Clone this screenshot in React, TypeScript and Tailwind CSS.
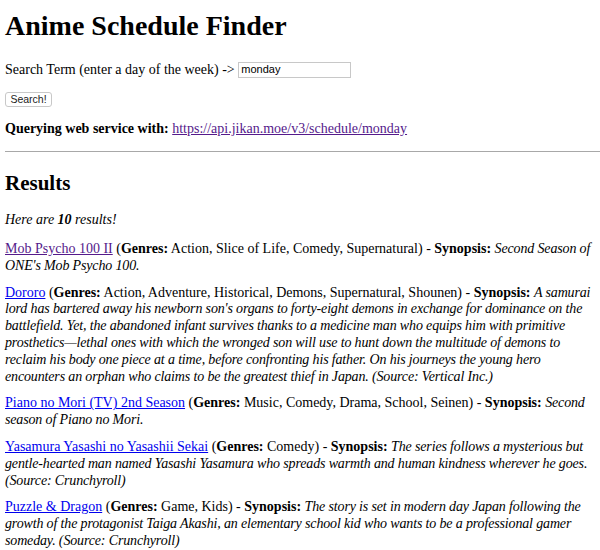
import React from "react";

type Item = { title: string; visited?: boolean; genres: string; synopsis: string };

const items: Item[] = [
  {
    title: "Mob Psycho 100 II",
    visited: true,
    genres: "Action, Slice of Life, Comedy, Supernatural",
    synopsis: "Second Season of ONE's Mob Psycho 100.",
  },
  {
    title: "Dororo",
    genres: "Action, Adventure, Historical, Demons, Supernatural, Shounen",
    synopsis:
      "A samurai lord has bartered away his newborn son's organs to forty-eight demons in exchange for dominance on the battlefield. Yet, the abandoned infant survives thanks to a medicine man who equips him with primitive prosthetics\u2014lethal ones with which the wronged son will use to hunt down the multitude of demons to reclaim his body one piece at a time, before confronting his father. On his journeys the young hero encounters an orphan who claims to be the greatest thief in Japan. (Source: Vertical Inc.)",
  },
  {
    title: "Piano no Mori (TV) 2nd Season",
    genres: "Music, Comedy, Drama, School, Seinen",
    synopsis: "Second season of Piano no Mori.",
  },
  {
    title: "Yasamura Yasashi no Yasashii Sekai",
    genres: "Comedy",
    synopsis:
      "The series follows a mysterious but gentle-hearted man named Yasashi Yasamura who spreads warmth and human kindness wherever he goes. (Source: Crunchyroll)",
  },
  {
    title: "Puzzle & Dragon",
    genres: "Game, Kids",
    synopsis:
      "The story is set in modern day Japan following the growth of the protagonist Taiga Akashi, an elementary school kid who wants to be a professional gamer someday. (Source: Crunchyroll)",
  },
];

export default function App() {
  return (
    <div className="min-h-[550px] bg-white pl-[5px] pt-[10px] text-black [font-family:'Liberation_Serif',serif] text-[14px] leading-[17px]">
      <h1 className="text-[28px] leading-[32px] font-bold">Anime Schedule Finder</h1>
      <div className="mt-[19px] flex h-[17px] items-center pr-[2px]">
        <span>Search Term (enter a day of the week) -&gt;&nbsp;</span>
        <input
          readOnly
          value="monday"
          className="h-[16px] w-[113px] border border-[#c8c8c8] px-[2px] text-[11px] [font-family:'Liberation_Sans',sans-serif] outline-none"
        />
      </div>
      <div className="mt-[14px] flex">
        <button className="h-[15px] w-[47px] rounded-[3px] border border-[#c8c8c8] bg-white text-[10.5px] leading-[13px] [font-family:'Liberation_Sans',sans-serif] text-[#222]">
          Search!
        </button>
      </div>
      <p className="mt-[13px] pr-[2px]">
        <b>Querying web service with:</b>{" "}
        <a className="text-[#551A8B] underline" href="#">https://api.jikan.moe/v3/schedule/monday</a>
      </p>
      <hr className="mt-[14px] border-t border-[#a8a8a8]" />
      <h2 className="mt-[19px] text-[21px] leading-[24px] font-bold">Results</h2>
      <p className="mt-[16px] italic pr-[2px]">
        Here are <b>10</b> results!
      </p>
      <div className="mt-[13px] flex flex-col gap-[10px] pr-[2px] leading-[16.8px]">
        {items.map((it) => (
          <p key={it.title}>
            <a className={"underline " + (it.visited ? "text-[#551A8B]" : "text-[#0000EE]")} href="#">
              {it.title}
            </a>{" "}
            (<b>Genres:</b> {it.genres}) - <b>Synopsis:</b>{" "}
            <i className="tracking-[-0.15px]">{it.synopsis}</i>
          </p>
        ))}
      </div>
    </div>
  );
}
